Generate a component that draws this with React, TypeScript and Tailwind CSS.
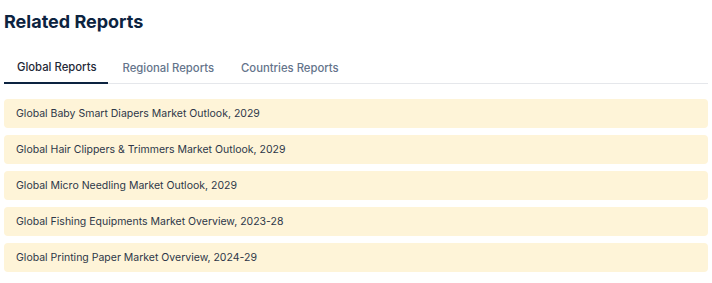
const tabs = ["Global Reports", "Regional Reports", "Countries Reports"];

const reports = [
  "Global Baby Smart Diapers Market Outlook, 2029",
  "Global Hair Clippers & Trimmers Market Outlook, 2029",
  "Global Micro Needling Market Outlook, 2029",
  "Global Fishing Equipments Market Overview, 2023-28",
  "Global Printing Paper Market Overview, 2024-29",
];

export default function App() {
  return (
    <div className="w-[712px] h-[283px] bg-white pl-1 pr-[4px] pt-[10px] font-['Inter',sans-serif]">
      <h2 className="text-[18px] leading-[24px] font-bold text-[#0c2340]">Related Reports</h2>

      {/* Tabs */}
      <div className="mt-[25px] flex gap-[1px] border-b border-[#e5e7eb]">
        {tabs.map((t, i) => (
          <button
            key={t}
            className={
              i === 0
                ? "pl-[13px] pr-[12px] pb-[7px] text-[11.3px] leading-[16px] font-medium text-[#1f2937] border-b-2 border-[#0c2340] -mb-px"
                : "px-[13px] pb-[7px] text-[11.3px] leading-[16px] font-medium text-[#64748b]"
            }
          >
            {t}
          </button>
        ))}
      </div>

      {/* Report list */}
      <div className="mt-[15px] flex flex-col gap-[7px]">
        {reports.map((r) => (
          <div key={r} className="h-[29px] flex items-center rounded-[4px] bg-[#fef4d8] px-3 text-[10.5px] text-[#2d3748]">
            {r}
          </div>
        ))}
      </div>
    </div>
  );
}
